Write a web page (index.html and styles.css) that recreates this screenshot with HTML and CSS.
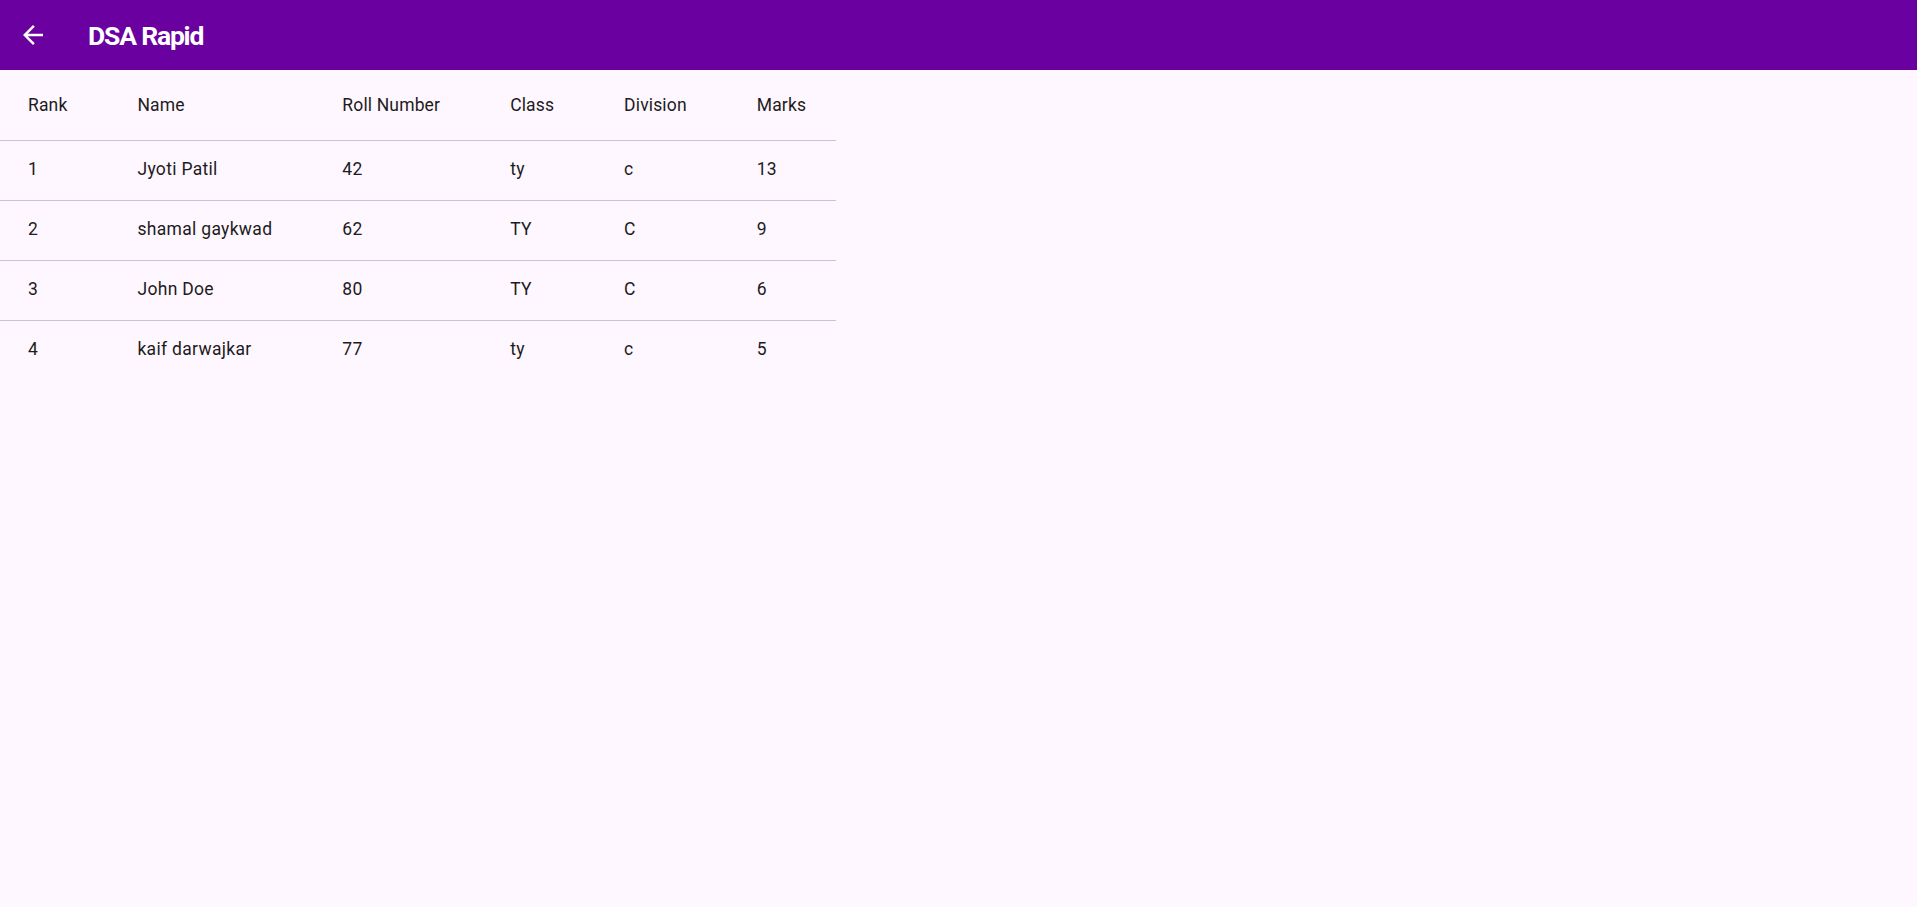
FILE: index.html
```html
<!DOCTYPE html>
<html>
<head>
<meta charset="utf-8">
<link rel="stylesheet" href="styles.css">
</head>
<body>
<header class="appbar">
  <div class="lead">
    <svg class="back" viewBox="0 0 24 24" width="30" height="30"><path d="M20 11H7.83l5.59-5.59L12 4l-8 8 8 8 1.41-1.41L7.83 13H20v-2z" fill="#fff"/></svg>
  </div>
  <h1 class="title">DSA Rapid</h1>
</header>
<table class="table">
  <thead>
    <tr><th>Rank</th><th>Name</th><th>Roll Number</th><th>Class</th><th>Division</th><th>Marks</th></tr>
  </thead>
  <tbody>
    <tr><td>1</td><td>Jyoti Patil</td><td>42</td><td>ty</td><td>c</td><td>13</td></tr>
    <tr><td>2</td><td>shamal gaykwad</td><td>62</td><td>TY</td><td>C</td><td>9</td></tr>
    <tr><td>3</td><td>John Doe</td><td>80</td><td>TY</td><td>C</td><td>6</td></tr>
    <tr><td>4</td><td>kaif darwajkar</td><td>77</td><td>ty</td><td>c</td><td>5</td></tr>
  </tbody>
</table>
</body>
</html>
```

FILE: styles.css
```css
html, body {
  margin: 0;
  padding: 0;
  background: #fef7ff;
  font-family: Roboto, "Noto Sans", sans-serif;
  color: #1d1b20;
}
.appbar {
  height: 70px;
  background: #6a00a0;
  display: flex;
  align-items: center;
}
.lead {
  width: 70px;
  height: 70px;
  display: flex;
  align-items: center;
  padding-left: 18px;
  box-sizing: border-box;
}
.back {
  display: block;
}
.title {
  margin: 0 0 0 18px;
  font-size: 26.5px;
  font-weight: 700;
  color: #fff;
  letter-spacing: -1.2px;
}
.table {
  border-collapse: collapse;
  font-size: 17.5px;
}
.table th, .table td {
  text-align: left;
  white-space: nowrap;
  padding: 0 35px;
  font-weight: 400;
  border-bottom: 1px solid #cac4d0;
}
.table th {
  height: 70px;
  letter-spacing: 0.15px;
}
.table td {
  height: 56px;
  padding-bottom: 3px;
  letter-spacing: 0.31px;
}
.table th:first-child, .table td:first-child {
  padding-left: 28px;
}
.table th:last-child, .table td:last-child {
  padding-right: 30px;
}
.table tbody tr:last-child td {
  border-bottom: none;
}
```
